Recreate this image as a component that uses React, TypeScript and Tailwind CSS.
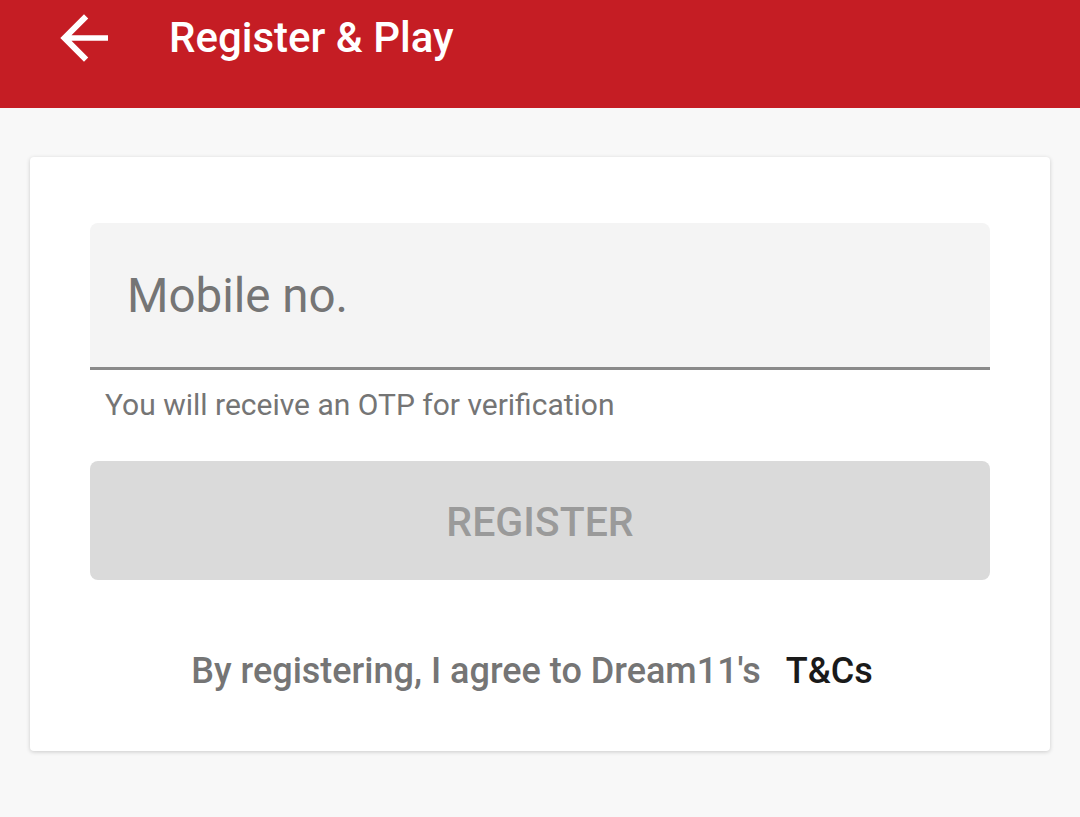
import React from "react";

export default function App() {
  return (
    <div className="w-[1080px] h-[817px] bg-[#f8f8f8] overflow-hidden" style={{ fontFamily: "Roboto, 'Liberation Sans', sans-serif" }}>
      <header className="h-[108px] bg-[#c51d24] flex items-start">
        <div className="w-[169px] h-[76px] flex items-center pl-[48px]">
          <svg width="72" height="72" viewBox="0 0 24 24" className="text-white">
            <path d="M20 11.1H7.83l5.59-5.59L12 4.1l-7.9 7.9 7.9 7.9 1.41-1.41L7.83 12.9H20v-1.8z" fill="currentColor" />
          </svg>
        </div>
        <h1 className="h-[76px] flex items-center text-white text-[42px] font-medium leading-none">Register &amp; Play</h1>
      </header>
      <div className="mx-[30px] mt-[49px] bg-white rounded-[4px] shadow-[0_1px_4px_rgba(0,0,0,0.18)] px-[60px] pt-[66px] pb-[60px]">
        <div className="h-[147px] bg-[#f4f4f4] rounded-t-[8px] border-b-[3px] border-[#8a8a8a] flex items-center pl-[37px] pt-[4px]">
          <span className="text-[47.5px] text-[#757575] leading-none">Mobile no.</span>
        </div>
        <div className="mt-[17px] h-[36px] pl-[15px] flex items-center text-[30px] text-[#757575] leading-none">
          You will receive an OTP for verification
        </div>
        <button className="mt-[38px] w-full h-[119px] bg-[#dadada] rounded-[8px] flex items-center justify-center text-[41px] font-medium text-[#9a9a9a] leading-none pt-[4px]">
          REGISTER
        </button>
        <div className="mt-[71px] h-[40px] flex items-center justify-center text-[36px] leading-none pr-[16px]">
          <span className="text-[#757575] font-medium">By registering, I agree to Dream11's</span>
          <span className="ml-[25px] text-[#1a1a1a] font-medium">T&amp;Cs</span>
        </div>
      </div>
    </div>
  );
}
